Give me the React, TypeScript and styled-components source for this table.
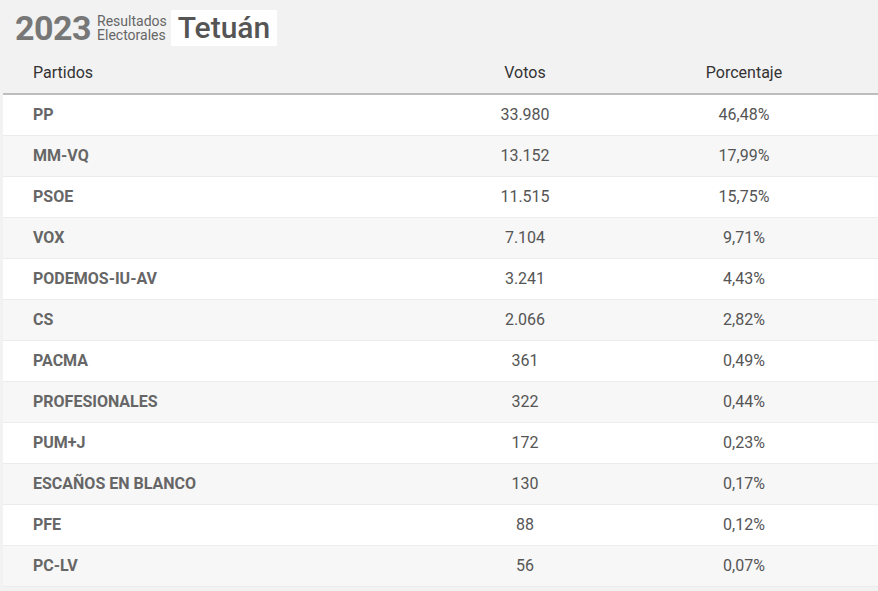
import styled, { createGlobalStyle } from 'styled-components'

const GlobalStyle = createGlobalStyle`
  body {
    margin: 0;
    background: #f2f2f2;
    font-family: Roboto, "Liberation Sans", sans-serif;
  }
`

const results = [
	{ party: 'PP', votes: '33.980', pct: '46,48%' },
	{ party: 'MM-VQ', votes: '13.152', pct: '17,99%' },
	{ party: 'PSOE', votes: '11.515', pct: '15,75%' },
	{ party: 'VOX', votes: '7.104', pct: '9,71%' },
	{ party: 'PODEMOS-IU-AV', votes: '3.241', pct: '4,43%' },
	{ party: 'CS', votes: '2.066', pct: '2,82%' },
	{ party: 'PACMA', votes: '361', pct: '0,49%' },
	{ party: 'PROFESIONALES', votes: '322', pct: '0,44%' },
	{ party: 'PUM+J', votes: '172', pct: '0,23%' },
	{ party: 'ESCAÑOS EN BLANCO', votes: '130', pct: '0,17%' },
	{ party: 'PFE', votes: '88', pct: '0,12%' },
	{ party: 'PC-LV', votes: '56', pct: '0,07%' },
]

function App() {
	return (
		<>
			<GlobalStyle />
			<StyledWrapper>
				<StyledTitle>
					<StyledYear>2023</StyledYear>
					<StyledSubtitle>
						<span>Resultados</span>
						<span>Electorales</span>
					</StyledSubtitle>
					<StyledPlace>Tetuán</StyledPlace>
				</StyledTitle>
				<StyledTable>
					<colgroup>
						<col style={{ width: 437 }} />
						<col style={{ width: 170 }} />
						<col />
					</colgroup>
					<thead>
						<tr>
							<StyledHeadCell $align="left">Partidos</StyledHeadCell>
							<StyledHeadCell $align="center">Votos</StyledHeadCell>
							<StyledHeadCell $align="center">Porcentaje</StyledHeadCell>
						</tr>
					</thead>
					<tbody>
						{results.map((row, i) => (
							<StyledRow key={row.party} $striped={i % 2 === 1}>
								<StyledPartyCell>{row.party}</StyledPartyCell>
								<StyledNumberCell>{row.votes}</StyledNumberCell>
								<StyledNumberCell>{row.pct}</StyledNumberCell>
							</StyledRow>
						))}
					</tbody>
				</StyledTable>
			</StyledWrapper>
		</>
	)
}

const StyledWrapper = styled('div')`
  padding: 10px 0 0 3px;
`
const StyledTitle = styled('div')`
  display: flex;
  align-items: center;
  padding-left: 12px;
  height: 36px;
`
const StyledYear = styled('span')`
  font-size: 34px;
  font-weight: 700;
  color: #777;
  letter-spacing: -0.5px;
`
const StyledSubtitle = styled('span')`
  display: flex;
  flex-direction: column;
  font-size: 14px;
  line-height: 14px;
  color: #666;
  margin-left: 6px;
`
const StyledPlace = styled('span')`
  background: #fff;
  color: #555;
  font-size: 30px;
  font-weight: 500;
  height: 36px;
  line-height: 36px;
  padding: 0 7px;
  margin-left: 4px;
`
const StyledTable = styled('table')`
  width: 875px;
  table-layout: fixed;
  border-collapse: collapse;
  margin-top: 6px;
`
const StyledHeadCell = styled.th<{ $align: 'left' | 'center' }>`
  text-align: ${(props) => props.$align};
  font-weight: 400;
  font-size: 16px;
  color: #333;
  height: 40px;
  padding: 0 0 1px ${(props) => (props.$align === 'left' ? '30px' : '0')};
  border-bottom: 2px solid #bdbdbd;
  vertical-align: middle;
`
const StyledRow = styled.tr<{ $striped: boolean }>`
  background: ${(props) => (props.$striped ? '#f7f7f7' : '#fff')};
  border-bottom: 1px solid #ececec;
`
const StyledPartyCell = styled('td')`
  height: 39px;
  padding: 0 0 1px 30px;
  font-size: 16px;
  font-weight: 700;
  color: #666;
`
const StyledNumberCell = styled('td')`
  height: 39px;
  padding: 0 0 1px;
  text-align: center;
  font-size: 16px;
  color: #555;
`

export default App
